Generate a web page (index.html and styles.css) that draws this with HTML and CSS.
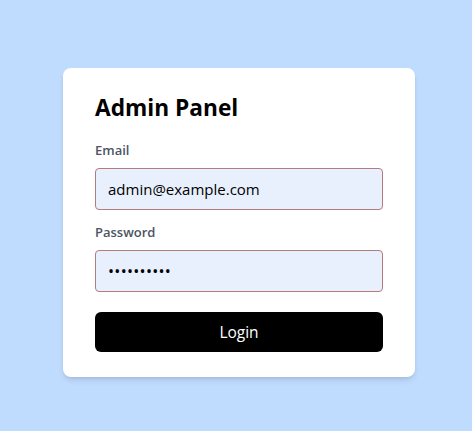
FILE: index.html
```html
<!DOCTYPE html>
<html>
<head>
<meta charset="utf-8">
<link rel="stylesheet" href="styles.css">
</head>
<body>
<main class="page">
  <form class="card">
    <h1 class="title">Admin Panel</h1>
    <label class="label" for="email">Email</label>
    <input class="input" id="email" type="email" value="admin@example.com">
    <label class="label label-second" for="pw">Password</label>
    <input class="input input-password" id="pw" type="password" value="secret1234">
    <button class="button" type="button">Login</button>
  </form>
</main>
</body>
</html>
```

FILE: styles.css
```css
* { box-sizing: border-box; }
html, body { margin: 0; padding: 0; }
body {
  background: #bfdbfe;
  font-family: "Open Sans", "Noto Sans", sans-serif;
  width: 472px;
  height: 431px;
  overflow: hidden;
}
.page {
  padding: 68px 0 0 63px;
}
.card {
  width: 352px;
  background: #ffffff;
  border-radius: 8px;
  padding: 24px 32px 25px 32px;
  box-shadow: 0 4px 6px -1px rgba(0,0,0,0.1), 0 2px 4px -2px rgba(0,0,0,0.1);
  display: flex;
  flex-direction: column;
}
.title {
  margin: 0 0 16px 0;
  font-size: 22.7px;
  line-height: 32px;
  font-weight: 700;
  color: #000;
}
.label {
  display: block;
  font-size: 13px;
  line-height: 20px;
  font-weight: 600;
  color: #4b5563;
  margin-bottom: 8px;
}
.label-second { margin-top: 12px; }
.input {
  width: 100%;
  height: 42px;
  padding: 8px 12px;
  font-family: inherit;
  font-size: 15px;
  line-height: 24px;
  color: #000;
  background: #e8f0fe;
  border: 1px solid #b57b7b;
  border-radius: 4px;
  outline: none;
}
.input-password {
  font-size: 16px;
  letter-spacing: 0.3px;
}
.button {
  margin-top: 20px;
  height: 40px;
  width: 100%;
  background: #000;
  color: #fff;
  border: none;
  border-radius: 6px;
  font-family: inherit;
  font-size: 15.5px;
}
```
